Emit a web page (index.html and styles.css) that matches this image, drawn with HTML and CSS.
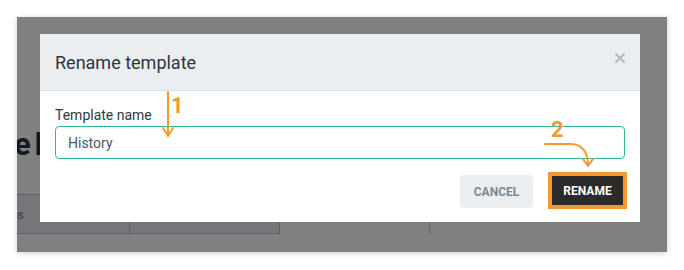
FILE: index.html
```html
<!DOCTYPE html>
<html lang="en">
<head>
<meta charset="utf-8">
<title>Rename template</title>
<link rel="stylesheet" href="styles.css">
</head>
<body>
<div class="page">
  <div class="frame">
    <div class="bg">
      <h1 class="bg-title">e l</h1>
      <div class="bg-tabs">
        <div class="bg-tab first"><span>s</span></div>
        <div class="bg-tab second"></div>
        <div class="bg-panel"></div>
      </div>
    </div>
    <div class="dialog">
      <div class="dialog-header">
        <h2 class="dialog-title">Rename template</h2>
        <button class="close" aria-label="Close">
          <svg width="10" height="10" viewBox="0 0 10 10"><path d="M1 1L9 9M9 1L1 9" stroke="#b6bcc1" stroke-width="2.2" stroke-linecap="square"/></svg>
        </button>
      </div>
      <div class="dialog-body">
        <label class="field-label" for="tname">Template name</label>
        <input id="tname" class="field-input" type="text" value="History">
      </div>
      <div class="dialog-footer">
        <button class="btn btn-cancel">Cancel</button>
        <button class="btn btn-rename">Rename</button>
      </div>
    </div>
  </div>
</div>
<svg class="annot" width="684" height="270" viewBox="0 0 684 270">
  <g fill="none" stroke="#f7982f" stroke-width="2" stroke-linecap="round" stroke-linejoin="round">
    <path d="M168 92V136"/>
    <path d="M163 128L168 136L173 128"/>
    <path d="M545 144H571C582 144 588 152 588 165"/>
    <path d="M583 159L588 166L593 159"/>
  </g>
  <text x="171" y="113" class="num">1</text>
  <text x="551" y="137" class="num">2</text>
</svg>
</body>
</html>
```

FILE: styles.css
```css
html, body {
  margin: 0;
  padding: 0;
  background: #ffffff;
  font-family: Roboto, "Liberation Sans", Arial, sans-serif;
}
body {
  position: relative;
  width: 684px;
  height: 270px;
  overflow: hidden;
}
.page {
  padding: 17px;
}
.frame {
  position: relative;
  width: 650px;
  height: 235px;
  background: #808080;
  overflow: hidden;
  box-shadow: 0 1px 6px rgba(0, 0, 0, 0.18);
}
.bg {
  padding-top: 109px;
}
.bg-title {
  margin: 0 0 30px -3px;
  font-size: 31px;
  line-height: 38px;
  font-weight: 700;
  color: #15191e;
  white-space: nowrap;
  word-spacing: -4px;
}
.bg-tabs {
  display: flex;
  height: 39px;
}
.bg-tab {
  box-sizing: border-box;
  height: 40px;
  background: #75767a;
  border-top: 1px solid #606165;
  border-bottom: 1px solid #606165;
  border-right: 1px solid #606165;
}
.bg-tab.first {
  width: 113px;
  display: flex;
  align-items: center;
  padding-left: 0;
  font-size: 13px;
  color: #3d3f43;
  white-space: nowrap;
}
.bg-tab.second {
  width: 150px;
}
.bg-panel {
  margin-left: 149px;
  width: 10px;
  height: 40px;
  border-left: 1px solid #626367;
}
.dialog {
  position: absolute;
  left: 23px;
  top: 17px;
  width: 600px;
  height: 188px;
  background: #ffffff;
}
.dialog-header {
  box-sizing: border-box;
  height: 57px;
  background: #eaeef0;
  border-bottom: 1px solid #dde1e3;
  display: flex;
  align-items: center;
  justify-content: space-between;
  padding: 0 15px;
}
.dialog-title {
  margin: 0;
  font-size: 18px;
  font-weight: 400;
  line-height: 21px;
  color: #2b3541;
}
.close {
  border: 0;
  background: none;
  padding: 0;
  width: 10px;
  height: 10px;
  margin-top: -9px;
  display: block;
}
.close svg {
  display: block;
}
.dialog-body {
  padding: 16px 15px 0;
}
.field-label {
  display: block;
  font-size: 14px;
  line-height: 17px;
  color: #2f3a46;
  margin-bottom: 2px;
}
.field-input {
  box-sizing: border-box;
  display: block;
  width: 570px;
  height: 33px;
  margin: 0;
  border: 1px solid #2db79b;
  border-radius: 4px;
  padding: 0 12px;
  font-family: Roboto, "Liberation Sans", Arial, sans-serif;
  font-size: 14px;
  color: #4a5868;
  outline: none;
  background: #fff;
}
.dialog-footer {
  display: flex;
  justify-content: flex-end;
  align-items: flex-start;
  gap: 15px;
  margin-top: 13px;
  padding: 0 13px 0 15px;
}
.btn {
  box-sizing: border-box;
  font-family: Roboto, "Liberation Sans", Arial, sans-serif;
  font-size: 12px;
  font-weight: 700;
  text-transform: uppercase;
  border-radius: 4px;
  cursor: pointer;
}
.btn-cancel {
  margin-top: 3px;
  width: 73px;
  height: 33px;
  border: 0;
  background: #eaeef0;
  color: #7e8892;
}
.btn-rename {
  width: 79px;
  height: 37px;
  border: 4px solid #f7982f;
  border-radius: 0;
  background: #2b2b2b;
  color: #ffffff;
}
.annot {
  position: absolute;
  left: 0;
  top: 0;
  pointer-events: none;
}
.num {
  font-family: Roboto, "Liberation Sans", Arial, sans-serif;
  font-size: 22px;
  font-weight: 700;
  fill: #f7982f;
}
```
